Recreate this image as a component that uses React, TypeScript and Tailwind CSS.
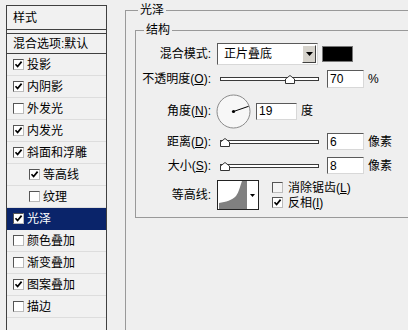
import React from "react";

interface StyleItem {
  label: string;
  checked: boolean;
  sub?: boolean;
  active?: boolean;
}

const styleItems: StyleItem[] = [
  { label: "投影", checked: true },
  { label: "内阴影", checked: true },
  { label: "外发光", checked: false },
  { label: "内发光", checked: true },
  { label: "斜面和浮雕", checked: true },
  { label: "等高线", checked: true, sub: true },
  { label: "纹理", checked: false, sub: true },
  { label: "光泽", checked: true, active: true },
  { label: "颜色叠加", checked: false },
  { label: "渐变叠加", checked: false },
  { label: "图案叠加", checked: true },
  { label: "描边", checked: false },
];

const CheckBox: React.FC<{ checked: boolean; muted?: boolean }> = ({ checked, muted }) => (
  <span
    className={`w-[11px] h-[11px] shrink-0 flex items-center justify-center border border-t-[#555] border-l-[#555] border-r-[#bbb] border-b-[#bbb] ${
      muted ? "bg-[#f4f4f4]" : "bg-white"
    }`}
  >
    {checked && (
      <svg width="9" height="9" viewBox="0 0 9 9">
        <path d="M1.5 4.2 L3.6 6.5 L7.6 1.6" stroke="#000" strokeWidth="1.7" fill="none" />
      </svg>
    )}
  </span>
);

const Sunken: React.FC<{ className: string; children?: React.ReactNode }> = ({ className, children }) => (
  <div
    className={`bg-white border border-t-[#5a5a5a] border-l-[#5a5a5a] border-r-[#d8d8d8] border-b-[#d8d8d8] flex items-center ${className}`}
  >
    {children}
  </div>
);

const Slider: React.FC<{ thumb: number }> = ({ thumb }) => (
  <div className="relative w-[102px] h-[18px] flex items-center">
    <div className="ml-[3px] w-[99px] h-[4px] border border-[#3a3a3a] bg-white" />
    <svg
      className="absolute top-[5px]"
      style={{ left: thumb }}
      width="10"
      height="9"
      viewBox="0 0 10 9"
    >
      <path d="M0.5 8.5 L0.5 4 L5 0.5 L9.5 4 L9.5 8.5 Z" fill="#fff" stroke="#333" />
    </svg>
  </div>
);

const Label: React.FC<{ children: React.ReactNode }> = ({ children }) => (
  <span className="w-[75px] shrink-0 text-right">{children}</span>
);

export default function App() {
  return (
    <div className="w-[408px] h-[330px] overflow-hidden bg-[#efefef] flex text-[12px] leading-[16px] text-black [font-family:'Liberation_Sans','Noto_Sans_CJK_SC',sans-serif]">
      {/* left list of styles */}
      <div className="mt-[5px] ml-[6px] w-[101px] h-[340px] shrink-0 border-l border-t border-r border-[#404040] bg-[#f1f1f1]">
        <div className="h-[24px] border-b border-[#404040] flex items-center pl-[6px]">样式</div>
        <div className="mt-[3px] h-[21px] border-t border-b border-[#404040] flex items-center pl-[6px]">
          混合选项:默认
        </div>
        {styleItems.map((item) => (
          <div
            key={item.label}
            className={`h-[22px] border-b flex items-center gap-[3px] ${item.sub ? "pl-[22px]" : "pl-[6px]"} ${
              item.active ? "bg-[#0a246a] text-white border-[#0a246a]" : "border-[#dddddd]"
            }`}
          >
            <CheckBox checked={item.checked} />
            <span>{item.label}</span>
          </div>
        ))}
      </div>

      {/* right settings */}
      <fieldset className="ml-[18px] mt-[2px] w-[300px] h-[340px] shrink-0 border-l border-t border-[#999] p-0 m-0">
        <legend className="ml-[12px] px-[2px]">光泽</legend>
        <fieldset className="ml-[9px] mt-[4px] w-[290px] h-[196px] border-l border-t border-b border-[#999] p-0">
          <legend className="ml-[8px] px-[2px]">结构</legend>

          <div className="mt-[5px] h-[22px] flex items-center">
            <Label>混合模式:</Label>
            <Sunken className="ml-[6px] w-[101px] h-[22px] justify-between">
              <span className="pl-[6px]">正片叠底</span>
              <span className="mr-[1px] w-[14px] h-[18px] bg-[#d6d3cc] border border-t-white border-l-white border-r-[#404040] border-b-[#404040] flex items-center justify-center">
                <svg width="7" height="4" viewBox="0 0 7 4">
                  <path d="M0 0 H7 L3.5 4 Z" fill="#000" />
                </svg>
              </span>
            </Sunken>
            <div className="ml-[4px] w-[31px] h-[16px] bg-black border border-[#777]" />
          </div>

          <div className="mt-[5px] h-[18px] flex items-center">
            <Label>
              不透明度(<span className="underline">O</span>):
            </Label>
            <div className="ml-[6px]">
              <Slider thumb={68} />
            </div>
            <Sunken className="ml-[8px] w-[37px] h-[18px]">
              <span className="pl-[2px]">70</span>
            </Sunken>
            <span className="ml-[4px]">%</span>
          </div>

          <div className="mt-[6px] h-[34px] flex items-center">
            <Label>
              角度(<span className="underline">N</span>):
            </Label>
            <svg className="ml-[5px]" width="35" height="35" viewBox="0 0 35 35">
              <circle cx="17.5" cy="17.5" r="16.5" fill="#f7f7f7" stroke="#8a8a8a" />
              <line x1="17.5" y1="17.5" x2="32.6" y2="12.3" stroke="#000" strokeWidth="1" />
              <circle cx="17.5" cy="17.5" r="1.6" fill="#000" />
            </svg>
            <Sunken className="ml-[5px] w-[41px] h-[17px]">
              <span className="pl-[2px]">19</span>
            </Sunken>
            <span className="ml-[4px]">度</span>
          </div>

          <div className="mt-[5px] h-[17px] flex items-center">
            <Label>
              距离(<span className="underline">D</span>):
            </Label>
            <div className="ml-[6px]">
              <Slider thumb={3} />
            </div>
            <Sunken className="ml-[8px] w-[37px] h-[17px]">
              <span className="pl-[2px]">6</span>
            </Sunken>
            <span className="ml-[4px]">像素</span>
          </div>

          <div className="mt-[7px] h-[17px] flex items-center">
            <Label>
              大小(<span className="underline">S</span>):
            </Label>
            <div className="ml-[6px]">
              <Slider thumb={3} />
            </div>
            <Sunken className="ml-[8px] w-[37px] h-[17px]">
              <span className="pl-[2px]">8</span>
            </Sunken>
            <span className="ml-[4px]">像素</span>
          </div>

          <div className="mt-[6px] h-[30px] flex items-center">
            <Label>等高线:</Label>
            <div className="ml-[6px] w-[42px] h-[30px] border border-[#222] bg-white flex">
              <svg width="29" height="28" viewBox="0 0 29 28">
                <path d="M1 28 L1 22 C8 21 14 19 18 15 C21 11 22 5 24 0 L29 0 L29 28 Z" fill="#808080" />
              </svg>
              <span className="flex-1 flex items-center justify-center">
                <svg width="5" height="3" viewBox="0 0 5 3">
                  <path d="M0 0 H5 L2.5 3 Z" fill="#000" />
                </svg>
              </span>
            </div>
            <div className="ml-[13px] flex flex-col">
              <div className="h-[15px] flex items-center gap-[5px]">
                <CheckBox checked={false} muted />
                <span>
                  消除锯齿(<span className="underline">L</span>)
                </span>
              </div>
              <div className="h-[15px] flex items-center gap-[5px]">
                <CheckBox checked />
                <span>
                  反相(<span className="underline">I</span>)
                </span>
              </div>
            </div>
          </div>
        </fieldset>
      </fieldset>
    </div>
  );
}
